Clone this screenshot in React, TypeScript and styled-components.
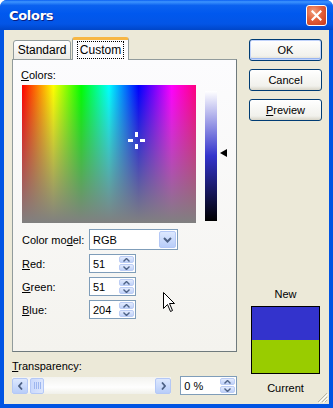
import React from 'react'
import styled, { createGlobalStyle } from 'styled-components'

const GlobalStyle = createGlobalStyle`
  html, body {
    margin: 0;
    padding: 0;
    background: #ffffff;
  }
  * {
    box-sizing: border-box;
  }
`

const Window = styled.div`
  width: 333px;
  height: 408px;
  display: flex;
  flex-direction: column;
  background: #0054e3;
  border-radius: 7px 7px 0 0;
  overflow: hidden;
  font-family: 'Liberation Sans', Arial, sans-serif;
  font-size: 11px;
  color: #000;
`

const TitleBar = styled.div`
  height: 30px;
  flex: none;
  display: flex;
  align-items: center;
  justify-content: space-between;
  padding: 0 6px 0 9px;
  background: linear-gradient(
    to bottom,
    #0a5ff2 0%,
    #3d94fe 6%,
    #0b62f0 18%,
    #0058ee 45%,
    #0355e6 80%,
    #0046c8 100%
  );
`

const Title = styled.span`
  color: #fff;
  font-family: 'DejaVu Sans', sans-serif;
  font-weight: bold;
  font-size: 13px;
  letter-spacing: -0.3px;
  text-shadow: 1px 1px 0 #0a1e80;
`

const CloseButton = styled.div`
  width: 21px;
  height: 21px;
  border: 1px solid #fff;
  border-radius: 3px;
  background: radial-gradient(circle at 35% 30%, #f2a07e 0%, #e2603a 45%, #c8381a 100%);
  display: flex;
  align-items: center;
  justify-content: center;
`

const Client = styled.div`
  flex: 1;
  margin: 0 4px 4px 4px;
  background: #ece9d8;
  display: flex;
  padding: 7px 8px 0 8px;
  gap: 12px;
  position: relative;
`

const LeftColumn = styled.div`
  width: 225px;
  display: flex;
  flex-direction: column;
`

const TabStrip = styled.div`
  height: 23px;
  display: flex;
  align-items: flex-end;
  padding-left: 1px;
  position: relative;
  z-index: 1;
`

const Tab = styled.div<{ $active?: boolean }>`
  height: ${p => (p.$active ? 23 : 20)}px;
  padding: 0 5px;
  display: flex;
  align-items: center;
  justify-content: center;
  border: 1px solid #919b9c;
  border-bottom: ${p => (p.$active ? 'none' : '1px solid #919b9c')};
  border-radius: 3px 3px 0 0;
  background: ${p =>
    p.$active ? '#fcfcfe' : 'linear-gradient(to bottom, #ffffff, #ecebe5)'};
  border-top: ${p => (p.$active ? '3px solid #f7b644' : '1px solid #919b9c')};
  margin-right: ${p => (p.$active ? 0 : 1)}px;
  font-size: 12px;
  width: ${p => (p.$active ? 57 : 58)}px;
`

const FocusText = styled.span`
  outline: 1px dotted #000;
  outline-offset: 1px;
  padding: 0 1px;
`

const Panel = styled.div`
  margin-top: -1px;
  height: 293px;
  border: 1px solid #919b9c;
  border-right-color: #6f7a7d;
  border-bottom-color: #6f7a7d;
  background: linear-gradient(to bottom, #fcfcfe, #f4f3ee);
  padding: 9px 8px 0 8px;
  display: flex;
  flex-direction: column;
`

const Label = styled.div`
  font-size: 11px;
  line-height: 13px;
`

const Key = styled.span`
  text-decoration: underline;
`

const SpectrumRow = styled.div`
  margin-top: 3px;
  display: flex;
  align-items: flex-start;
`

const Spectrum = styled.div`
  margin-left: 1px;
  width: 174px;
  height: 138px;
  position: relative;
  background:
    linear-gradient(to bottom, rgba(128, 128, 128, 0) 0%, rgba(128, 128, 128, 1) 100%),
    linear-gradient(
      to right,
      #ff0000 0%,
      #ffff00 18%,
      #00ff00 34%,
      #00ffff 50%,
      #0000ff 67%,
      #ff00ff 86%,
      #ff0080 100%
    );
`

const Crosshair = styled.svg`
  position: absolute;
  left: 104px;
  top: 45px;
`

const LumBar = styled.div`
  margin-left: 9px;
  margin-top: 6px;
  width: 12px;
  height: 130px;
  background: linear-gradient(to bottom, #ffffff 0%, #3333cc 50%, #000000 100%);
`

const ArrowMark = styled.div`
  margin-left: 3px;
  margin-top: 64px;
  width: 0;
  height: 0;
  border-top: 4px solid transparent;
  border-bottom: 4px solid transparent;
  border-right: 7px solid #000;
`

const FieldRow = styled.div<{ $top?: number }>`
  display: flex;
  align-items: center;
  margin-top: ${p => p.$top ?? 4}px;
  position: relative;
`

const FieldLabel = styled.div`
  width: 68px;
  padding-left: 1px;
  font-size: 11px;
`

const Select = styled.div`
  width: 89px;
  height: 21px;
  border: 1px solid #7f9db9;
  background: #fff;
  display: flex;
  align-items: center;
  justify-content: space-between;
  padding: 1px 1px 1px 3px;
  font-size: 11px;
`

const DropButton = styled.div`
  width: 17px;
  height: 17px;
  border-radius: 2px;
  border: 1px solid #b4c8f6;
  background: linear-gradient(to bottom, #dde8fe, #b8cdf9);
  display: flex;
  align-items: center;
  justify-content: center;
`

const Spin = styled.div<{ $width: number }>`
  width: ${p => p.$width}px;
  height: 19px;
  border: 1px solid #7f9db9;
  background: #fff;
  display: flex;
  align-items: center;
  justify-content: space-between;
  padding: 1px 1px 1px 3px;
  font-size: 11px;
`

const SpinButtons = styled.div`
  width: 15px;
  height: 100%;
  display: flex;
  flex-direction: column;
  gap: 1px;
`

const SpinHalf = styled.div`
  flex: 1;
  border-radius: 2px;
  border: 1px solid #bccdf5;
  background: linear-gradient(to bottom, #e3ebfd, #bfd1f8);
  display: flex;
  align-items: center;
  justify-content: center;
`

const Pointer = styled.svg`
  position: absolute;
  left: 142px;
  top: -8px;
`

const TransLabel = styled.div`
  margin-top: 8px;
  font-size: 11px;
  padding-left: 0px;
`

const TransRow = styled.div`
  margin-top: 4px;
  display: flex;
  align-items: center;
  gap: 9px;
`

const Scrollbar = styled.div`
  width: 160px;
  height: 17px;
  display: flex;
  align-items: center;
  background: linear-gradient(to bottom, #f3f3ef, #fefefe 60%, #f0f0ea);
`

const ScrollArrow = styled.div`
  width: 16px;
  height: 16px;
  border-radius: 2px;
  border: 1px solid #b4c8f6;
  background: linear-gradient(to bottom, #dde8fe, #b8cdf9);
  display: flex;
  align-items: center;
  justify-content: center;
`

const Thumb = styled.div`
  margin-left: 2px;
  width: 14px;
  height: 16px;
  border-radius: 2px;
  border: 1px solid #b4c8f6;
  background: linear-gradient(to right, #cad9fc, #dce6fd);
  display: flex;
  align-items: center;
  justify-content: center;
  gap: 1px;
`

const Grip = styled.div`
  width: 1px;
  height: 7px;
  background: #9db6ef;
`

const Track = styled.div`
  flex: 1;
`

const RightColumn = styled.div`
  width: 73px;
  display: flex;
  flex-direction: column;
  align-items: center;
  padding-top: 2px;
`

const Button = styled.div<{ $default?: boolean }>`
  width: 73px;
  height: 22px;
  margin-bottom: 8px;
  border: 1px solid #003c74;
  border-radius: 3px;
  background: linear-gradient(to bottom, #ffffff, #f1f1ec 80%, #d8d5c8);
  box-shadow: ${p => (p.$default ? 'inset 0 0 0 1px #c1d3fb, inset 0 -1px 0 1px #97b4f0' : 'none')};
  display: flex;
  align-items: center;
  justify-content: center;
  font-size: 11px;
`

const Spacer = styled.div`
  flex: 1;
`

const PreviewLabel = styled.div`
  font-size: 11px;
  line-height: 13px;
`

const Swatch = styled.div`
  margin-top: 5px;
  width: 69px;
  height: 68px;
  border: 1px solid #000;
  display: flex;
  flex-direction: column;
`

const SwatchHalf = styled.div<{ $color: string }>`
  flex: 1;
  background: ${p => p.$color};
`

const CurrentLabel = styled(PreviewLabel)`
  margin-top: 8px;
  margin-bottom: 9px;
`

const SizeGrip = styled.svg`
  position: absolute;
  right: 1px;
  bottom: 1px;
`

const Up = () => (
  <svg width="7" height="4" viewBox="0 0 7 4">
    <path d="M0.5 3.5 L3.5 0.5 L6.5 3.5" fill="none" stroke="#4d6185" strokeWidth="1.4" />
  </svg>
)

const Down = () => (
  <svg width="7" height="4" viewBox="0 0 7 4">
    <path d="M0.5 0.5 L3.5 3.5 L6.5 0.5" fill="none" stroke="#4d6185" strokeWidth="1.4" />
  </svg>
)

const SpinBox: React.FC<{ value: string; width: number }> = ({ value, width }) => (
  <Spin $width={width}>
    <span>{value}</span>
    <SpinButtons>
      <SpinHalf>
        <Up />
      </SpinHalf>
      <SpinHalf>
        <Down />
      </SpinHalf>
    </SpinButtons>
  </Spin>
)

export default function App() {
  return (
    <>
      <GlobalStyle />
      <Window>
        <TitleBar>
          <Title>Colors</Title>
          <CloseButton>
            <svg width="11" height="11" viewBox="0 0 11 11">
              <path d="M1.5 1.5 L9.5 9.5 M9.5 1.5 L1.5 9.5" stroke="#fff" strokeWidth="2.2" strokeLinecap="square" />
            </svg>
          </CloseButton>
        </TitleBar>
        <Client>
          <LeftColumn>
            <TabStrip>
              <Tab>Standard</Tab>
              <Tab $active>
                <FocusText>Custom</FocusText>
              </Tab>
            </TabStrip>
            <Panel>
              <Label>
                <Key>C</Key>olors:
              </Label>
              <SpectrumRow>
                <Spectrum>
                  <Crosshair width="21" height="21" viewBox="0 0 21 21">
                    <g fill="#fff">
                      <rect x="9" y="2" width="3" height="5" />
                      <rect x="9" y="14" width="3" height="5" />
                      <rect x="2" y="9" width="5" height="3" />
                      <rect x="14" y="9" width="5" height="3" />
                    </g>
                  </Crosshair>
                </Spectrum>
                <LumBar />
                <ArrowMark />
              </SpectrumRow>
              <FieldRow $top={6}>
                <FieldLabel>
                  Color mo<Key>d</Key>el:
                </FieldLabel>
                <Select>
                  <span>RGB</span>
                  <DropButton>
                    <svg width="9" height="6" viewBox="0 0 9 6">
                      <path d="M1 1 L4.5 4.5 L8 1" fill="none" stroke="#4d6185" strokeWidth="2" />
                    </svg>
                  </DropButton>
                </Select>
              </FieldRow>
              <FieldRow>
                <FieldLabel>
                  <Key>R</Key>ed:
                </FieldLabel>
                <SpinBox value="51" width={47} />
              </FieldRow>
              <FieldRow>
                <FieldLabel>
                  <Key>G</Key>reen:
                </FieldLabel>
                <SpinBox value="51" width={47} />
              </FieldRow>
              <FieldRow>
                <FieldLabel>
                  <Key>B</Key>lue:
                </FieldLabel>
                <SpinBox value="204" width={47} />
                <Pointer width="13" height="21" viewBox="0 0 13 21">
                  <path
                    d="M0.5 0.5 L0.5 16.5 L4.5 12.5 L7.5 19.5 L9.5 18.5 L6.5 11.5 L11.5 11.5 Z"
                    fill="#fff"
                    stroke="#000"
                    strokeWidth="1"
                  />
                </Pointer>
              </FieldRow>
            </Panel>
            <TransLabel>
              <Key>T</Key>ransparency:
            </TransLabel>
            <TransRow>
              <Scrollbar>
                <ScrollArrow>
                  <svg width="5" height="8" viewBox="0 0 5 8">
                    <path d="M4 0.5 L1 4 L4 7.5" fill="none" stroke="#4d6185" strokeWidth="1.8" />
                  </svg>
                </ScrollArrow>
                <Thumb>
                  <Grip />
                  <Grip />
                  <Grip />
                  <Grip />
                </Thumb>
                <Track />
                <ScrollArrow>
                  <svg width="5" height="8" viewBox="0 0 5 8">
                    <path d="M1 0.5 L4 4 L1 7.5" fill="none" stroke="#4d6185" strokeWidth="1.8" />
                  </svg>
                </ScrollArrow>
              </Scrollbar>
              <SpinBox value="0 %" width={57} />
            </TransRow>
          </LeftColumn>
          <RightColumn>
            <Button $default>OK</Button>
            <Button>Cancel</Button>
            <Button>
              <span>
                <Key>P</Key>review
              </span>
            </Button>
            <Spacer />
            <PreviewLabel>New</PreviewLabel>
            <Swatch>
              <SwatchHalf $color="#3333cc" />
              <SwatchHalf $color="#99cc00" />
            </Swatch>
            <CurrentLabel>Current</CurrentLabel>
          </RightColumn>
          <SizeGrip width="12" height="12" viewBox="0 0 12 12">
            <g stroke="#b9b6a7" strokeWidth="1">
              <path d="M11 2 L2 11" />
              <path d="M11 6 L6 11" />
              <path d="M11 9 L9 11" />
            </g>
            <g stroke="#fff" strokeWidth="1">
              <path d="M12 3 L3 12" />
              <path d="M12 7 L7 12" />
            </g>
          </SizeGrip>
        </Client>
      </Window>
    </>
  )
}
